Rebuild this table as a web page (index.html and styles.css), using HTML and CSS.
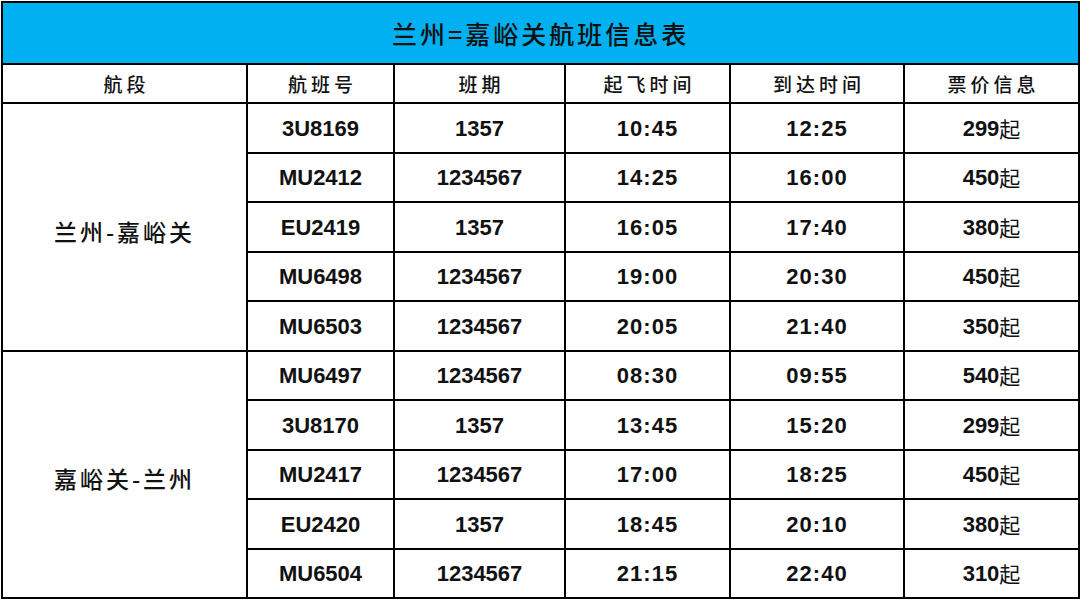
FILE: index.html
```html
<!DOCTYPE html>
<html lang="zh-CN">
<head>
<meta charset="utf-8">
<title>兰州=嘉峪关航班信息表</title>
<link rel="stylesheet" href="styles.css">
</head>
<body>
<table class="sched">
  <colgroup>
    <col class="c1"><col class="c2"><col class="c3"><col class="c4"><col class="c5"><col class="c6">
  </colgroup>
  <thead>
    <tr class="title-row"><th colspan="6" class="title">兰州=嘉峪关航班信息表</th></tr>
    <tr class="head-row">
      <th>航段</th><th>航班号</th><th>班期</th><th>起飞时间</th><th>到达时间</th><th>票价信息</th>
    </tr>
  </thead>
  <tbody>
    <tr><td rowspan="5" class="route">兰州-嘉峪关</td><td>3U8169</td><td>1357</td><td class="time">10:45</td><td class="time">12:25</td><td class="price">299<span class="qi">起</span></td></tr>
    <tr><td>MU2412</td><td>1234567</td><td class="time">14:25</td><td class="time">16:00</td><td class="price">450<span class="qi">起</span></td></tr>
    <tr><td>EU2419</td><td>1357</td><td class="time">16:05</td><td class="time">17:40</td><td class="price">380<span class="qi">起</span></td></tr>
    <tr><td>MU6498</td><td>1234567</td><td class="time">19:00</td><td class="time">20:30</td><td class="price">450<span class="qi">起</span></td></tr>
    <tr><td>MU6503</td><td>1234567</td><td class="time">20:05</td><td class="time">21:40</td><td class="price">350<span class="qi">起</span></td></tr>
    <tr><td rowspan="5" class="route">嘉峪关-兰州</td><td>MU6497</td><td>1234567</td><td class="time">08:30</td><td class="time">09:55</td><td class="price">540<span class="qi">起</span></td></tr>
    <tr><td>3U8170</td><td>1357</td><td class="time">13:45</td><td class="time">15:20</td><td class="price">299<span class="qi">起</span></td></tr>
    <tr><td>MU2417</td><td>1234567</td><td class="time">17:00</td><td class="time">18:25</td><td class="price">450<span class="qi">起</span></td></tr>
    <tr><td>EU2420</td><td>1357</td><td class="time">18:45</td><td class="time">20:10</td><td class="price">380<span class="qi">起</span></td></tr>
    <tr><td>MU6504</td><td>1234567</td><td class="time">21:15</td><td class="time">22:40</td><td class="price">310<span class="qi">起</span></td></tr>
  </tbody>
</table>
</body>
</html>
```

FILE: styles.css
```css
html, body {
  margin: 0;
  padding: 0;
  background: #ffffff;
}
body {
  padding: 1px 0 0 1px;
  font-family: "Liberation Sans", Arial, "Noto Sans CJK SC", sans-serif;
  color: #111111;
}
.sched {
  border-collapse: collapse;
  table-layout: fixed;
  width: 1077px;
}
.c1 { width: 245px; }
.c2 { width: 147px; }
.c3 { width: 171px; }
.c4 { width: 165px; }
.c5 { width: 174px; }
.c6 { width: 175px; }
.sched th, .sched td {
  border: 2px solid #000000;
  padding: 0;
  text-align: center;
  vertical-align: middle;
}
.title-row { height: 62px; }
.title {
  background: #00b0f0;
  font-family: "Noto Sans CJK SC", sans-serif;
  font-weight: 500;
  font-size: 25px;
  letter-spacing: 3px;
  padding-top: 12px;
  padding-left: 8px;
  color: #111111;
}
.head-row { height: 39px; }
.head-row th {
  font-family: "Noto Sans CJK SC", sans-serif;
  font-weight: 500;
  font-size: 19px;
  letter-spacing: 4px;
  padding-top: 0;
  padding-left: 4px;
}
.sched tbody tr { height: 49.5px; }
.sched td {
  font-weight: bold;
  font-size: 22px;
  line-height: 26px;
  padding-top: 2px;
}
.sched td.route {
  font-family: "Noto Sans CJK SC", sans-serif;
  font-weight: 500;
  font-size: 23px;
  letter-spacing: 3px;
  line-height: 32px;
  padding-top: 8px;
}
.time { letter-spacing: 1px; }
.qi {
  font-family: "Noto Sans CJK SC", sans-serif;
  font-weight: 400;
  font-size: 21px;
  line-height: 0;
  vertical-align: -1px;
}
```
